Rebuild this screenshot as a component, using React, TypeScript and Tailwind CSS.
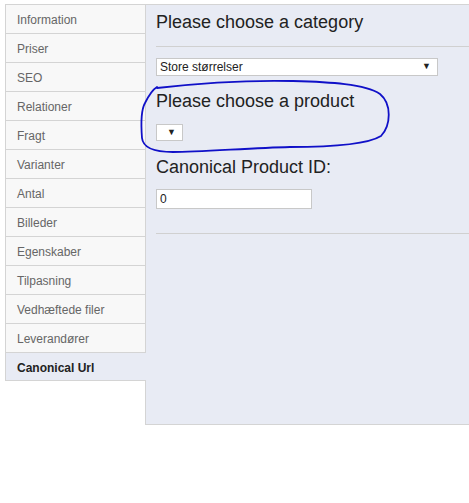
const tabs = [
  'Information',
  'Priser',
  'SEO',
  'Relationer',
  'Fragt',
  'Varianter',
  'Antal',
  'Billeder',
  'Egenskaber',
  'Tilpasning',
  'Vedhæftede filer',
  'Leverandører',
  'Canonical Url',
];

const ACTIVE = 'Canonical Url';

function Tab({ label }: { label: string }) {
  const active = label === ACTIVE;
  return (
    <li
      className={
        active
          ? 'relative z-10 -mr-px h-[29px] border-t border-b border-l border-[#d4d4d4] bg-[#e8ebf4] pt-[3px] pl-[11px] text-[12px] leading-[25px] font-bold text-[#222]'
          : 'h-[29px] border-t border-l border-[#d4d4d4] bg-[#f8f8f8] pt-[3px] pl-[11px] text-[12px] leading-[25px] text-[#666]'
      }
    >
      {label}
    </li>
  );
}

export default function App() {
  return (
    <div
      className="relative h-[503px] w-[469px] overflow-hidden bg-white pt-[4px] pl-[5px]"
      style={{ fontFamily: '"Liberation Sans", Arial, sans-serif' }}
    >
      <div className="flex items-start">
        <ul className="w-[140px] shrink-0">
          {tabs.map((t) => (
            <Tab key={t} label={t} />
          ))}
        </ul>
        <div className="h-[421px] flex-1 border-t border-b border-l border-[#d4d4d4] bg-[#e8ebf4] pl-[10px] text-[#222]">
          <h2 className="pt-[6px] text-[18px] leading-[22px]">Please choose a category</h2>
          <div className="mt-[13px] h-px bg-[#d0d0d0]" />
          <div className="mt-[11px] flex h-[18px] w-[282px] items-center justify-between border border-[#c8c8c8] bg-white pr-[6px] pl-[3px] text-[12px]">
            <span>Store størrelser</span>
            <span className="text-[9px]">▼</span>
          </div>
          <h2 className="mt-[14px] text-[18px] leading-[22px]">Please choose a product</h2>
          <div className="mt-[12px] flex h-[17px] w-[27px] items-center justify-end border border-[#c8c8c8] bg-white pr-[6px] text-[9px]">
            ▼
          </div>
          <h2 className="mt-[15px] text-[18px] leading-[22px]">Canonical Product ID:</h2>
          <div className="mt-[11px] flex h-[20px] w-[156px] items-center border border-[#c8c8c8] bg-white pl-[3px] text-[12px]">
            0
          </div>
          <div className="mt-[24px] h-px bg-[#d0d0d0]" />
        </div>
      </div>
      <svg
        className="pointer-events-none absolute top-0 left-0"
        width="469"
        height="503"
        viewBox="0 0 469 503"
        fill="none"
      >
        <path
          d="M157 88 C 200 83, 250 80, 293 81 C 330 82, 365 84, 380 94 C 392 104, 391 125, 381 136 C 365 146, 320 147, 290 147 C 250 148, 200 152, 173 152 C 155 152, 143 148, 142 138 C 141 125, 141 110, 145 103 C 149 95, 152 90, 157 87"
          stroke="#1010c8"
          strokeWidth="1.8"
          strokeLinecap="round"
        />
      </svg>
    </div>
  );
}
